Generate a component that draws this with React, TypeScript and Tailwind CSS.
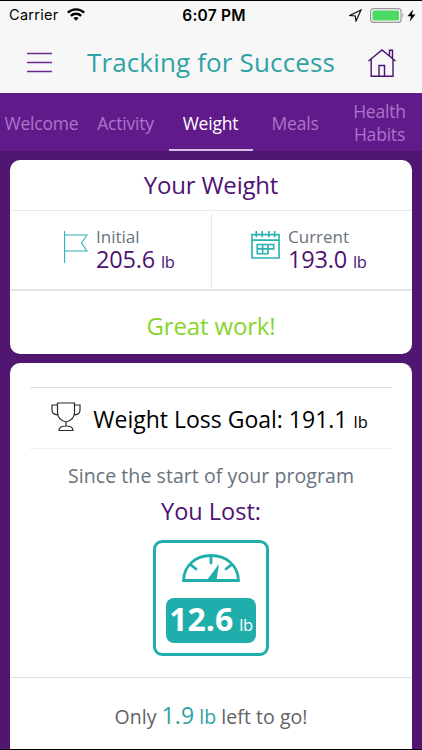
import React from "react";

function StatusBar() {
  return (
    <div className="flex h-[29px] items-center pl-[9px] pr-[6px] font-['Inter','Liberation_Sans',sans-serif] text-black">
      <div className="flex flex-1 items-center gap-[8px]">
        <span className="text-[14.500px] leading-none tracking-[0.3px]">Carrier</span>
        <svg width="18" height="13" viewBox="0 0 18 13" fill="none" stroke="#000" strokeWidth="2.4" className="-mt-[2px]">
          <path d="M.8 4.600C5.500 .3 12.500 .3 17.200 4.600" />
          <path d="M3.800 7.900C6.800 5.100 11.200 5.100 14.200 7.900" />
          <path d="M9 12.800L6.300 10.100Q9 7.800 11.700 10.100Z" fill="#000" stroke="none" />
        </svg>
      </div>
      <span className="pl-[3px] text-[15.500px] font-semibold leading-none tracking-[0.2px]">6:07 PM</span>
      <div className="flex flex-1 items-center justify-end">
        <svg width="13" height="13" viewBox="0 0 13 13" fill="none" stroke="#111" strokeWidth="1.200" className="-mt-[1px] mr-[8px]">
          <path d="M12 1L.9 6.400L6.200 7L7 12Z" />
        </svg>
        <svg width="35" height="15" viewBox="0 0 35 15" className="-mt-[1px]">
          <rect x=".6" y=".6" width="30.500" height="13.800" rx="3" fill="none" stroke="#999" strokeWidth="1.200" />
          <rect x="2.500" y="2.500" width="26.500" height="10" rx="1.500" fill="#4cd964" />
          <path d="M32.500 5Q34.500 7.500 32.500 10Z" fill="#999" />
        </svg>
        <svg width="9" height="13" viewBox="0 0 9 13" className="-mt-[1px] ml-[2px]">
          <path d="M6 .5L.5 7.200H4L2.800 12.500L8.500 5.500H5Z" />
        </svg>
      </div>
    </div>
  );
}

function Header() {
  return (
    <div className="flex h-[63px] items-start border-b border-white pl-[27px] pr-[26px]">
      <svg width="25" height="22" viewBox="0 0 25 22" stroke="#6a2a92" strokeWidth="1.300" className="mt-[22px]">
        <path d="M0 1.500H25M0 10.500H25M0 19.500H25" />
      </svg>
      <h1 className="mt-[13px] flex-1 whitespace-nowrap pl-[2px] text-center text-[26px] leading-[38px] tracking-[0.15px] text-[#2fa3a2]">Tracking for Success</h1>
      <svg width="28" height="28" viewBox="0 0 28 28" fill="none" stroke="#4b1272" strokeWidth="1.400" className="mt-[19px]">
        <path d="M.5 12L14 1L27.500 12M3.200 10V27.200H25V10M11 27V16.500H16.500V27M21.500 6.500V1.200H24.500V9" />
      </svg>
    </div>
  );
}

function Tabs() {
  return (
    <div className="flex h-[58px] shrink-0 items-center bg-[#611a8a] text-center text-[17.500px] leading-[23px] tracking-[-0.2px] text-[#ac74cb]">
      <div className="w-[83px] pt-[3px]">Welcome</div>
      <div className="w-[85px] pt-[3px]">Activity</div>
      <div className="ml-px flex h-full w-[84px] items-center justify-center border-b-2 border-[#d8bce8] pr-[1px] pt-[5px] text-white">Weight</div>
      <div className="w-[84px] pt-[3px]">Meals</div>
      <div className="w-[85px] pt-[2px]">Health<br />Habits</div>
    </div>
  );
}

function Stat({ label, value, children }: { label: string; value: string; children: React.ReactNode }) {
  return (
    <>
      {children}
      <div>
        <div className="text-[17px] leading-[20px] text-[#68727d]">{label}</div>
        <div className="flex items-baseline gap-[6px] text-[#4e1373]">
          <span className="text-[23.500px] leading-[24px] tracking-[-0.2px]">{value}</span>
          <span className="text-[16.500px] leading-[20px] tracking-[-0.3px]">lb</span>
        </div>
      </div>
    </>
  );
}

export default function App() {
  return (
    <div className="flex h-[750px] w-[422px] flex-col overflow-hidden border-y border-black bg-[#501670] font-['Open_Sans','Noto_Sans',sans-serif]">
      <div className="h-[92px] shrink-0 bg-[#f7f7f7]">
        <StatusBar />
        <Header />
      </div>
      <Tabs />
      <div className="mx-[10px] mt-[9px] h-[194px] shrink-0 rounded-[10px] bg-white">
        <h2 className="h-[51px] border-b border-[#e9e9ec] text-center text-[24px] leading-[49px] tracking-[-0.2px] text-[#4e1373]">Your Weight</h2>
        <div className="flex h-[80px] border-b-2 border-[#e4e6e6] pt-[16px]">
          <div className="flex w-[201px] pl-[55px]">
            <Stat label="Initial" value="205.6">
              <svg width="24" height="33" viewBox="0 0 24 33" fill="none" stroke="#2bb3b1" strokeWidth="1.100" className="mr-[8px] mt-[4px] -ml-px">
                <path d="M.6 0V32M.6 4H23L17.500 12L23 20H.6" />
              </svg>
            </Stat>
          </div>
          <div className="-mt-[13px] h-[74px] w-px bg-[#e9e9ec]" />
          <div className="flex flex-1 pl-[39px]">
            <Stat label="Current" value="193.0">
              <svg width="29" height="30" viewBox="0 0 30 30" fill="none" stroke="#2bb3b1" strokeWidth="1.700" className="mr-[8px] mt-[3px]">
                <path d="M1 4.300H29V28.500H1ZM1 10H29M5.500 .5V7M11.500 .5V7M18.500 .5V7M24.500 .5V7M6.500 14.500H23.500V19H17.500V24H6.500ZM6.500 19H17.500M12 14.500V24M17.500 14.500V19" />
              </svg>
            </Stat>
          </div>
        </div>
        <p className="text-center text-[24px] leading-[70px] tracking-[-0.15px] text-[#86d52d]">Great work!</p>
      </div>
      <div className="mx-[10px] mt-[9px] flex h-[400px] shrink-0 flex-col items-center rounded-t-[10px] bg-white pt-[24px]">
        <div className="flex h-[62px] w-[362px] items-center justify-center border-y border-t-[#dedee0] border-b-[#f0f0f2] pr-[3px]">
          <svg width="30" height="30" viewBox="0 0 30 30" fill="none" stroke="#2b2b2b" strokeWidth="1.200" className="-mt-[2px] mr-[12px]">
            <path d="M6.500 1H23.500V11Q23 18 15 20Q7 18 6.500 11ZM6.500 3H1V8Q1 12.500 6.500 12.800M23.500 3H29V8Q29 12.500 23.500 12.800M15 20V24M8 28.500Q8 24 15 24Q22 24 22 28.500Z" />
          </svg>
          <span className="pt-[2px] text-[23px] text-black">Weight Loss Goal: 191.1 <span className="text-[16.500px]">lb</span></span>
        </div>
        <p className="mt-[12px] text-[19.500px] leading-[30px] tracking-[0.070px] text-[#68727d]">Since the start of your program</p>
        <p className="mt-[2px] text-[23.500px] leading-[36px] text-[#4e1373]">You Lost:</p>
        <div className="mt-[11px] flex h-[116px] w-[116px] shrink-0 flex-col items-center rounded-[9px] border-[3px] border-[#20aeac]">
          <svg width="58" height="28" viewBox="0 0 58 28" fill="none" stroke="#20aeac" strokeWidth="2.800" className="mt-[11px]">
            <path d="M1.500 26.500C2 11 14 1.500 29 1.500S56 11 56.500 26.500Z" />
            <path d="M29 2V9M9 11L14 15M49 11L44 15" strokeLinecap="round" />
            <path d="M25 26L37 10L34.500 26Z" fill="#20aeac" stroke="none" />
          </svg>
          <div className="mt-[16px] flex h-[45px] w-[90px] items-baseline justify-center gap-[6px] rounded-[8px] bg-[#20aeac] leading-[42px] text-white">
            <span className="text-[32px] font-bold">12.6</span><span className="text-[16.500px] tracking-[-0.3px]">lb</span>
          </div>
        </div>
        <div className="mt-[21px] w-full border-t border-[#e1e1e4] text-center text-[19.500px] leading-[75px] tracking-[0.050px] text-[#616264]">
          Only <span className="text-[#2fa3a2]"><span className="text-[23px]">1.9</span> lb</span> left to go!
        </div>
      </div>
    </div>
  );
}
